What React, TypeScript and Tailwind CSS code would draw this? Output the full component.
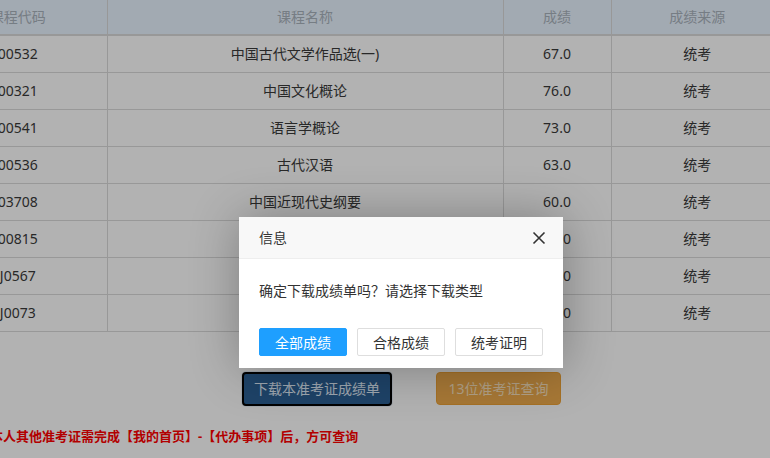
import React from "react";

const rows = [
  ["00532", "中国古代文学作品选(一)", "67.0", "统考"],
  ["00321", "中国文化概论", "76.0", "统考"],
  ["00541", "语言学概论", "73.0", "统考"],
  ["00536", "古代汉语", "63.0", "统考"],
  ["03708", "中国近现代史纲要", "60.0", "统考"],
  ["00815", "", "60.0", "统考"],
  ["J0567", "", "60.0", "统考"],
  ["J0073", "", "60.0", "统考"],
];

export default function App() {
  return (
    <div
      className="relative w-[770px] h-[458px] overflow-hidden bg-white"
      style={{ fontFamily: '"Noto Sans", "Noto Sans CJK SC", sans-serif' }}
    >
      <div className="ml-[-71px] w-[854px]">
        <table className="table-fixed border-collapse w-[854px] text-[14px]">
          <colgroup>
            <col className="w-[178px]" />
            <col className="w-[396px]" />
            <col className="w-[108px]" />
            <col className="w-[172px]" />
          </colgroup>
          <thead>
            <tr className="bg-[#e9f4ff] text-[#aab3bd] h-[35px]">
              <th className="font-normal border-b-2 border-r border-[#dadada] pb-[2px]">课程代码</th>
              <th className="font-normal border-b-2 border-r border-[#dadada] pb-[2px]">课程名称</th>
              <th className="font-normal border-b-2 border-r border-[#dadada] pb-[2px]">成绩</th>
              <th className="font-normal border-b-2 border-[#dadada] pb-[2px]">成绩来源</th>
            </tr>
          </thead>
          <tbody className="text-[#3a3a3a]">
            {rows.map((r, i) => (
              <tr key={i} className="h-[37px]">
                <td className="text-center border-b border-r border-[#dadada]">{r[0]}</td>
                <td className="text-center border-b border-r border-[#dadada]">{r[1]}</td>
                <td className="text-center border-b border-r border-[#dadada]">{r[2]}</td>
                <td className="text-center border-b border-[#dadada]">{r[3]}</td>
              </tr>
            ))}
          </tbody>
        </table>
      </div>

      <div className="flex mt-[40px] ml-[242px] gap-[44px] items-start">
        <button className="h-[34px] w-[150px] rounded-[4px] bg-[#2c6195] text-[#e3f0fd] text-[14px] border-2 border-black shadow-[0_0_0_1px_#e8f0f8]">
          下载本准考证成绩单
        </button>
        <button className="h-[33px] w-[125px] rounded-[4px] bg-[#f0ad4e] text-[#fde6c2] text-[14px] border border-[#eea236]">
          13位准考证查询
        </button>
      </div>

      <div className="mt-[21px] ml-[-10px] text-[13px] font-bold text-[#ff0000] whitespace-nowrap">
        本人其他准考证需完成【我的首页】-【代办事项】后，方可查询
      </div>

      <div className="absolute inset-0 bg-black/30" />

      <div className="absolute left-[239px] top-[217px] w-[324px] bg-white shadow-[1px_1px_50px_rgba(0,0,0,0.3)]">
        <div className="h-[42px] bg-[#f8f8f8] border-b border-[#eeeeee] flex items-center justify-between pl-5 pr-[17px] text-[14px] text-[#333]">
          <span>信息</span>
          <svg width="14" height="14" viewBox="0 0 14 14" className="mt-[1px]">
            <path d="M1.5 1.5 L12.5 12.5 M12.5 1.5 L1.5 12.5" stroke="#333" strokeWidth="1.6" fill="none" />
          </svg>
        </div>
        <div className="p-5 leading-[24px] text-[14px] text-[#333]">
          确定下载成绩单吗？请选择下载类型
        </div>
        <div className="flex gap-[10px] px-5 pb-3 mt-[5px]">
          <button className="h-[28px] w-[88px] rounded-[2px] bg-[#1e9fff] border border-[#1e9fff] text-white text-[14px]">
            全部成绩
          </button>
          <button className="h-[28px] w-[88px] rounded-[2px] bg-white border border-[#dedede] text-[#333] text-[14px]">
            合格成绩
          </button>
          <button className="h-[28px] w-[88px] rounded-[2px] bg-white border border-[#dedede] text-[#333] text-[14px]">
            统考证明
          </button>
        </div>
      </div>
    </div>
  );
}
